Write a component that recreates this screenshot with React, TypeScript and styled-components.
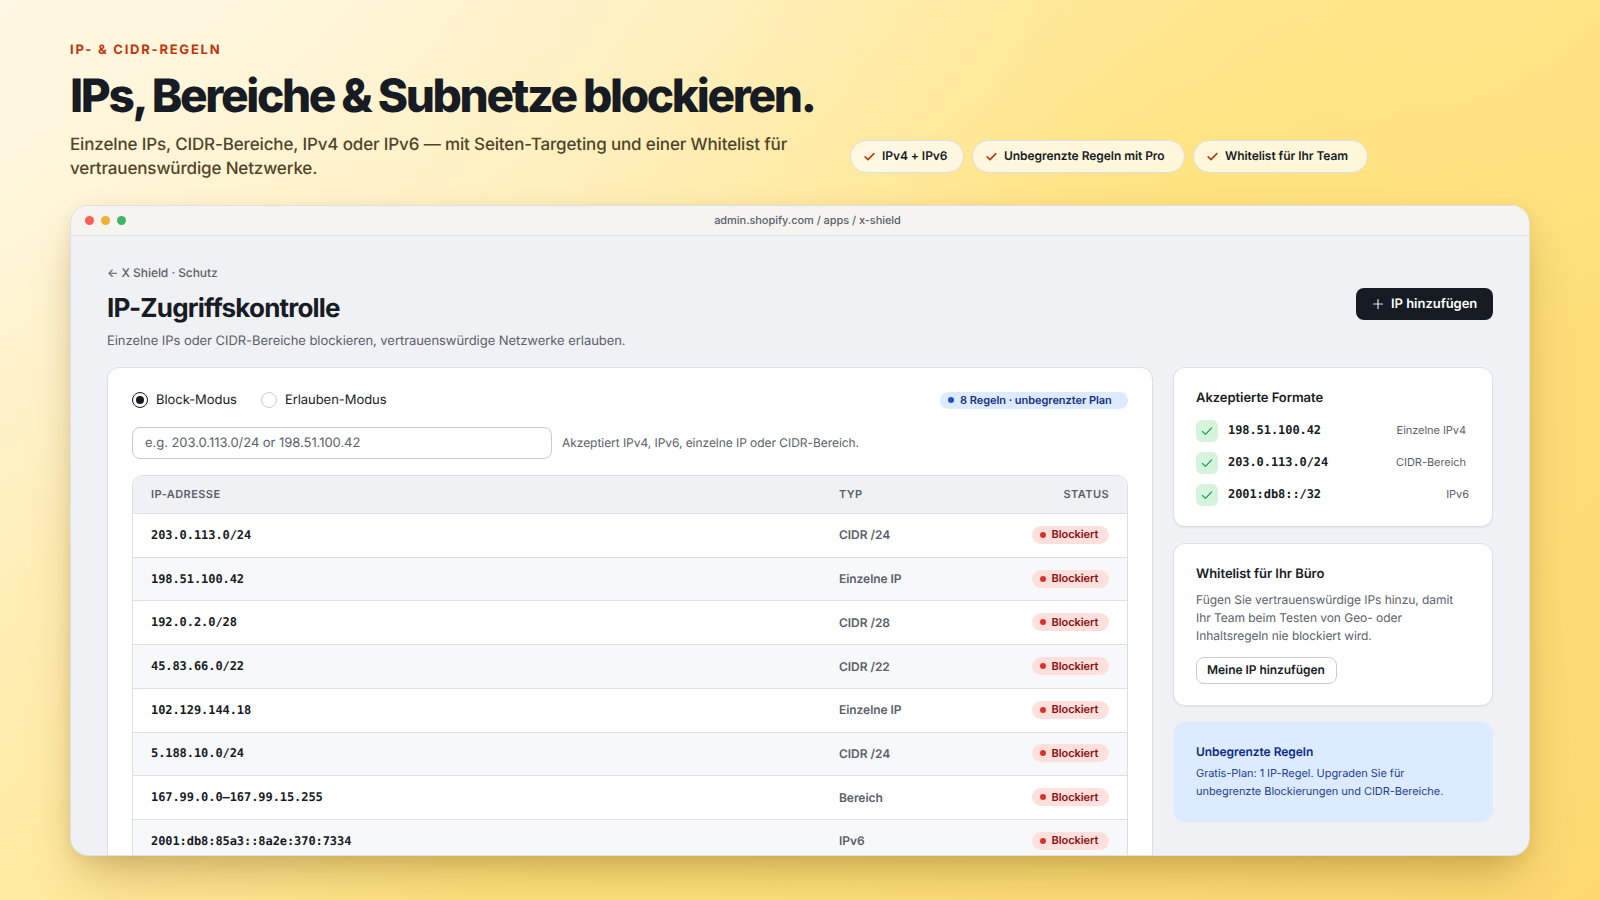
import React from "react";
import styled, { createGlobalStyle } from "styled-components";

const ink = "#171b24";
const muted = "#5a5f6b";
const line = "#dcdfe6";

const Global = createGlobalStyle`
  * { box-sizing: border-box; margin: 0; }
  body { margin: 0; font-family: Inter, "Liberation Sans", sans-serif; color: ${ink}; letter-spacing: -0.05px; text-rendering: geometricPrecision; -webkit-font-smoothing: antialiased; }
`;

const Page = styled.div`
  width: 1600px;
  height: 900px;
  overflow: hidden;
  padding: 42px 70px 0;
  background:
    radial-gradient(ellipse 56% 60% at 12% 0%, rgba(255, 248, 228, 0.6), rgba(255, 248, 228, 0) 100%),
    radial-gradient(ellipse 40% 35% at 90% 0%, rgba(255, 236, 160, 0.35), rgba(255, 236, 160, 0) 100%),
    linear-gradient(135deg, #fff8e4 0%, #ffe27d 55%, #fdd871 100%);
`;

const Hero = styled.header`
  display: flex;
  height: 163px;
`;
const HeroText = styled.div`
  width: 780px;
  white-space: nowrap;
`;
const Eyebrow = styled.div`
  font-size: 13px;
  line-height: 16px;
  font-weight: 700;
  letter-spacing: 1.76px;
  color: #bf360c;
`;
const Headline = styled.h1`
  margin-top: 13px;
  font-size: 46px;
  line-height: 50px;
  font-weight: 800;
  letter-spacing: -2.33px;
  word-spacing: -0.5px;
`;
const Lead = styled.p`
  margin-top: 12px;
  font-size: 17px;
  line-height: 24px;
  font-weight: 500;
  letter-spacing: -0.145px;
  color: #51452b;
`;
const Chips = styled.div`
  display: flex;
  gap: 8px;
  padding-top: 98px;
`;
const Chip = styled.div<{ $w: number }>`
  display: flex;
  align-items: center;
  gap: 6px;
  width: ${(p) => p.$w}px;
  height: 33px;
  padding: 0 0 0 12px;
  border: 1px solid ${line};
  border-radius: 17px;
  background: rgba(255, 255, 255, 0.7);
  font-size: 12px;
  font-weight: 600;
  white-space: nowrap;
`;
const ChipText = styled.span`
  padding-bottom: 2px;
`;

const Window = styled.main`
  height: 651px;
  display: flex;
  flex-direction: column;
  border: 1px solid ${line};
  border-radius: 18px;
  overflow: hidden;
  background: #f0f1f5;
  box-shadow: 0 24px 48px -12px rgba(110, 75, 0, 0.38), 0 4px 16px rgba(110, 75, 0, 0.08);
`;
const TitleBar = styled.div`
  display: grid;
  grid-template-columns: 60px 1fr 45px;
  align-items: center;
  flex: none;
  height: 30px;
  padding: 0 14px;
  background: #f6f4f0;
  border-bottom: 1px solid ${line};
`;
const Lights = styled.div`
  display: flex;
  gap: 7px;
`;
const Light = styled.i<{ $c: string }>`
  width: 9px;
  height: 9px;
  border-radius: 50%;
  background: ${(p) => p.$c};
`;
const Address = styled.div`
  padding-bottom: 1px;
  text-align: center;
  font-size: 11px;
  font-weight: 500;
  color: ${muted};
`;
const Body = styled.div`
  padding: 29px 36px 0;
`;
const PageHead = styled.div`
  display: flex;
  justify-content: space-between;
  height: 102px;
`;
const Crumb = styled.div`
  font-size: 12px;
  line-height: 16px;
  font-weight: 500;
  color: ${muted};
`;
const Title = styled.h2`
  margin-top: 12px;
  font-size: 26px;
  line-height: 31px;
  font-weight: 700;
  letter-spacing: -0.8px;
`;
const Sub = styled.p`
  margin-top: 8px;
  font-size: 13px;
  line-height: 18px;
  color: ${muted};
`;
const Primary = styled.button`
  display: flex;
  align-items: center;
  gap: 7px;
  width: 137px;
  height: 32px;
  margin-top: 23px;
  padding: 0 0 1px 16px;
  border: 0;
  border-radius: 8px;
  background: ${ink};
  color: #fff;
  font: 600 13px Inter, sans-serif;
  letter-spacing: -0.03px;
  text-rendering: geometricPrecision;
  white-space: nowrap;
`;
const Columns = styled.div`
  display: grid;
  grid-template-columns: 1046px 320px;
  gap: 20px;
  align-items: start;
`;
const Card = styled.section`
  border: 1px solid ${line};
  border-radius: 12px;
  background: #fff;
  box-shadow: 0 1px 2px rgba(20, 25, 40, 0.06);
`;
const MainCard = styled(Card)`
  height: 560px;
  padding: 22px 24px;
`;
const Modes = styled.div`
  display: flex;
  align-items: center;
  height: 20px;
  font-size: 13px;
`;
const Mode = styled.label`
  display: flex;
  align-items: center;
  gap: 8px;
  margin-right: 24px;
  line-height: 16px;
`;
const Radio = styled.span<{ $on?: boolean }>`
  width: 16px;
  height: 16px;
  padding: 3px;
  border: 1px solid ${(p) => (p.$on ? ink : "#c9ccd6")};
  border-radius: 50%;
  background: ${(p) => (p.$on ? ink : "#fff")} content-box;
`;
const Badge = styled.span<{ $tone: "info" | "bad" }>`
  display: flex;
  align-items: center;
  gap: ${(p) => (p.$tone === "info" ? 6 : 5.5)}px;
  width: ${(p) => (p.$tone === "info" ? 188 : 77)}px;
  height: ${(p) => (p.$tone === "info" ? 17 : 18)}px;
  margin-left: auto;
  padding-left: 8px;
  border-radius: 9px;
  background: ${(p) => (p.$tone === "info" ? "#dcebff" : "#ffe0dd")};
  color: ${(p) => (p.$tone === "info" ? "#17307f" : "#8a0f10")};
  font-size: 11px;
  line-height: 16px;
  font-weight: 600;
  white-space: nowrap;
  &::before {
    content: "";
    width: 6px;
    height: 6px;
    border-radius: 50%;
    background: ${(p) => (p.$tone === "info" ? "#1d4fd7" : "#d8322f")};
  }
`;
const BadgeText = styled.span`
  padding-bottom: 1px;
`;
const Entry = styled.div`
  display: flex;
  align-items: center;
  gap: 10px;
  margin-top: 17px;
  font-size: 12px;
  color: ${muted};
`;
const Field = styled.div`
  width: 420px;
  height: 32px;
  padding: 0 12px;
  border: 1px solid #c9ccd6;
  border-radius: 8px;
  background: #fff;
  font-size: 13px;
  line-height: 30px;
`;
const Hint = styled.span`
  padding-bottom: 2px;
`;
const Table = styled.div`
  margin-top: 16px;
  border: 1px solid ${line};
  border-radius: 10px;
  overflow: hidden;
`;
const Row = styled.div<{ $alt?: boolean }>`
  display: grid;
  grid-template-columns: 688px 1fr auto;
  align-items: center;
  height: 43.72px;
  padding: 0 18px 1px;
  border-top: 1px solid ${line};
  background: ${(p) => (p.$alt ? "#f7f8fa" : "#fff")};
  font-size: 12px;
  font-weight: 600;
  color: ${muted};
`;
const HeadRow = styled(Row)`
  height: 37px;
  padding-bottom: 2px;
  border-top: 0;
  background: #f0f1f5;
  font-size: 11px;
  font-weight: 600;
  letter-spacing: 0.42px;
`;
const Mono = styled.span`
  font-family: "DejaVu Sans Mono", monospace;
  font-size: 12px;
  font-weight: 700;
  letter-spacing: -0.07px;
  color: ${ink};
`;
const Side = styled.aside`
  display: flex;
  flex-direction: column;
  gap: 16px;
`;
const SideCard = styled(Card)<{ $h: number }>`
  height: ${(p) => p.$h}px;
  padding: 21px 22px;
`;
const CardTitle = styled.h3`
  font-size: 13px;
  line-height: 18px;
  font-weight: 600;
`;
const Formats = styled.div`
  display: grid;
  gap: 10px;
  margin-top: 13px;
`;
const Format = styled.div`
  display: flex;
  align-items: center;
  gap: 10px;
  height: 22px;
`;
const FormatValue = styled(Mono)`
  padding-bottom: 2px;
`;
const Tick = styled.span`
  display: grid;
  place-items: center;
  width: 22px;
  height: 22px;
  border-radius: 6px;
  background: #d6f3dd;
`;
const Kind = styled.span<{ $r: number }>`
  margin-left: auto;
  padding: 0 ${(p) => p.$r}px 2px 0;
  font-size: 11px;
  color: ${muted};
`;
const Copy = styled.p`
  margin-top: 8px;
  font-size: 12px;
  line-height: 18px;
  color: ${muted};
  white-space: nowrap;
`;
const Secondary = styled.button`
  display: block;
  width: 141px;
  height: 27px;
  margin-top: 12px;
  padding: 0 0 2px 10px;
  border: 1px solid #c9ccd6;
  border-radius: 8px;
  background: #fff;
  color: ${ink};
  font: 600 12px Inter, sans-serif;
  letter-spacing: -0.05px;
  text-rendering: geometricPrecision;
  text-align: left;
  white-space: nowrap;
`;
const Notice = styled.section`
  height: 100px;
  padding: 21px 23px;
  border-radius: 12px;
  background: #dcebff;
  color: #243f8f;
  font-size: 11px;
  line-height: 18px;
  white-space: nowrap;
`;
const NoticeTitle = styled.h3`
  margin-bottom: 3px;
  font-size: 12px;
  line-height: 18px;
  font-weight: 600;
  color: #0b2a8a;
`;

const Check = ({ size, color, w }: { size: number; color: string; w: number }) => (
  <svg width={size} height={size} viewBox="0 0 14 14" fill="none" stroke={color} strokeWidth={w} strokeLinecap="round" strokeLinejoin="round">
    <path d="M2.3 7.4 5.4 10.4 11.7 3.9" />
  </svg>
);

const chips: [string, number][] = [
  ["IPv4 + IPv6", 114],
  ["Unbegrenzte Regeln mit Pro", 213],
  ["Whitelist für Ihr Team", 175],
];
const rules = [
  ["203.0.113.0/24", "CIDR /24"],
  ["198.51.100.42", "Einzelne IP"],
  ["192.0.2.0/28", "CIDR /28"],
  ["45.83.66.0/22", "CIDR /22"],
  ["102.129.144.18", "Einzelne IP"],
  ["5.188.10.0/24", "CIDR /24"],
  ["167.99.0.0–167.99.15.255", "Bereich"],
  ["2001:db8:85a3::8a2e:370:7334", "IPv6"],
];
const formats: [string, string, number][] = [
  ["198.51.100.42", "Einzelne IPv4", 4],
  ["203.0.113.0/24", "CIDR-Bereich", 4],
  ["2001:db8::/32", "IPv6", 1],
];

export default function App() {
  return (
    <Page>
      <Global />
      <Hero>
        <HeroText>
          <Eyebrow>IP- &amp; CIDR-REGELN</Eyebrow>
          <Headline>IPs, Bereiche &amp; Subnetze blockieren.</Headline>
          <Lead>
            Einzelne IPs, CIDR-Bereiche, IPv4 oder IPv6 — mit Seiten-Targeting und einer Whitelist für
            <br />
            vertrauenswürdige Netzwerke.
          </Lead>
        </HeroText>
        <Chips>
          {chips.map(([text, w]) => (
            <Chip key={text} $w={w}>
              <Check size={13} color="#bf360c" w={1.7} />
              <ChipText>{text}</ChipText>
            </Chip>
          ))}
        </Chips>
      </Hero>
      <Window>
        <TitleBar>
          <Lights>
            <Light $c="#ff5f57" />
            <Light $c="#f0b132" />
            <Light $c="#3fb568" />
          </Lights>
          <Address>admin.shopify.com / apps / x-shield</Address>
        </TitleBar>
        <Body>
          <PageHead>
            <div>
              <Crumb>← X Shield · Schutz</Crumb>
              <Title>IP-Zugriffskontrolle</Title>
              <Sub>Einzelne IPs oder CIDR-Bereiche blockieren, vertrauenswürdige Netzwerke erlauben.</Sub>
            </div>
            <Primary>
              <svg width="12" height="12" viewBox="0 0 12 12" stroke="#dfe1e6" strokeWidth="1.2" strokeLinecap="round">
                <path d="M6 1.5v9M1.5 6h9" />
              </svg>
              IP hinzufügen
            </Primary>
          </PageHead>
          <Columns>
            <MainCard>
              <Modes>
                <Mode><Radio $on />Block-Modus</Mode>
                <Mode><Radio />Erlauben-Modus</Mode>
                <Badge $tone="info"><BadgeText>8 Regeln · unbegrenzter Plan</BadgeText></Badge>
              </Modes>
              <Entry>
                <Field>e.g. 203.0.113.0/24 or 198.51.100.42</Field>
                <Hint>Akzeptiert IPv4, IPv6, einzelne IP oder CIDR-Bereich.</Hint>
              </Entry>
              <Table>
                <HeadRow>
                  <span>IP-ADRESSE</span>
                  <span>TYP</span>
                  <span>STATUS</span>
                </HeadRow>
                {rules.map(([ip, kind], i) => (
                  <Row key={ip} $alt={i % 2 === 1}>
                    <Mono>{ip}</Mono>
                    <span>{kind}</span>
                    <Badge $tone="bad"><BadgeText>Blockiert</BadgeText></Badge>
                  </Row>
                ))}
              </Table>
            </MainCard>
            <Side>
              <SideCard $h={160}>
                <CardTitle>Akzeptierte Formate</CardTitle>
                <Formats>
                  {formats.map(([ip, kind, r]) => (
                    <Format key={ip}>
                      <Tick><Check size={14} color="#139a50" w={1.15} /></Tick>
                      <FormatValue>{ip}</FormatValue>
                      <Kind $r={r}>{kind}</Kind>
                    </Format>
                  ))}
                </Formats>
              </SideCard>
              <SideCard $h={163}>
                <CardTitle>Whitelist für Ihr Büro</CardTitle>
                <Copy>
                  Fügen Sie vertrauenswürdige IPs hinzu, damit
                  <br />
                  Ihr Team beim Testen von Geo- oder
                  <br />
                  Inhaltsregeln nie blockiert wird.
                </Copy>
                <Secondary>Meine IP hinzufügen</Secondary>
              </SideCard>
              <Notice>
                <NoticeTitle>Unbegrenzte Regeln</NoticeTitle>
                Gratis-Plan: 1 IP-Regel. Upgraden Sie für
                <br />
                unbegrenzte Blockierungen und CIDR-Bereiche.
              </Notice>
            </Side>
          </Columns>
        </Body>
      </Window>
    </Page>
  );
}
